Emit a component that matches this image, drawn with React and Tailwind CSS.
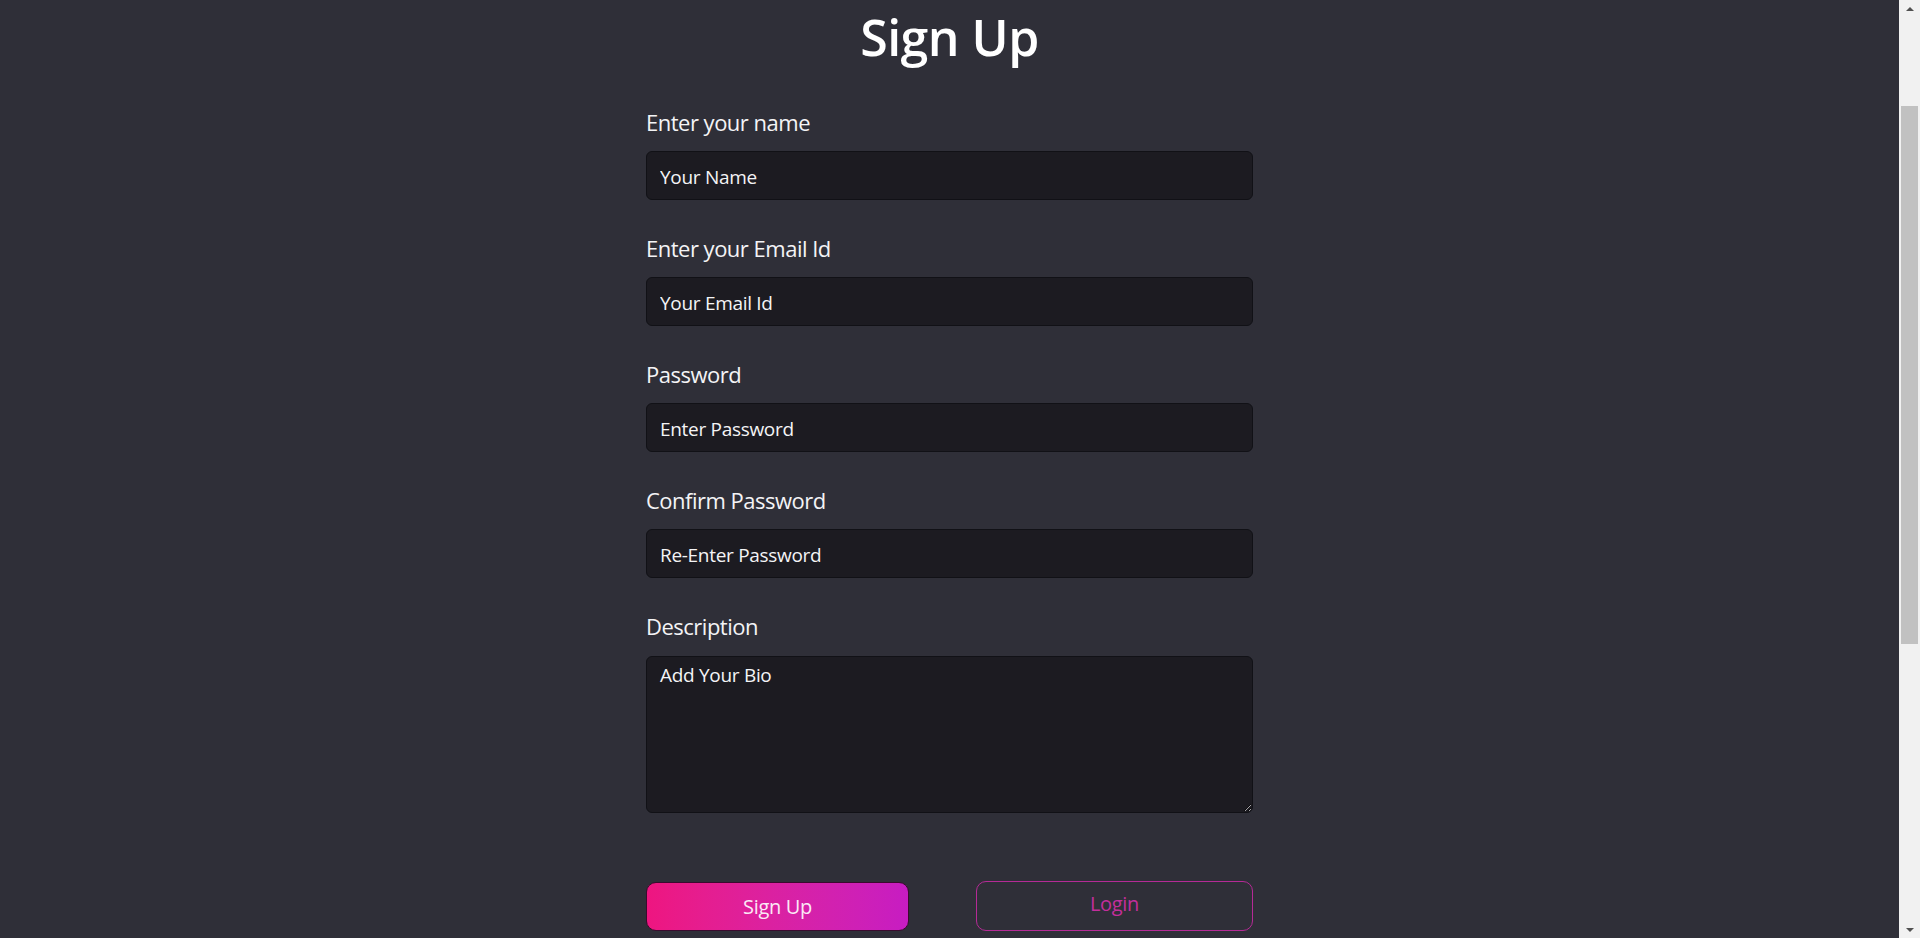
import { useState } from 'react'

const fields = [
  { label: 'Enter your name', placeholder: 'Your Name', type: 'text' },
  { label: 'Enter your Email Id', placeholder: 'Your Email Id', type: 'email' },
  { label: 'Password', placeholder: 'Enter Password', type: 'password' },
  { label: 'Confirm Password', placeholder: 'Re-Enter Password', type: 'password' },
]

function Scrollbar() {
  return (
    <aside className="sticky top-0 flex h-screen w-[21px] shrink-0 flex-col bg-[#f1f1f1]">
      <div className="flex h-[17px] items-center justify-center">
        <span className="h-0 w-0 border-x-[4px] border-b-[4px] border-x-transparent border-b-[#505050]"></span>
      </div>
      <div className="flex-1 px-[2px]">
        <div className="mt-[89px] h-[538px] bg-[#c1c1c1]"></div>
      </div>
      <div className="flex h-[17px] items-center justify-center">
        <span className="h-0 w-0 border-x-[4px] border-t-[4px] border-x-transparent border-t-[#505050]"></span>
      </div>
    </aside>
  )
}

export default function App() {
  const [bio, setBio] = useState('')

  return (
    <div className="flex min-h-screen bg-[#2f2f38] font-['Open_Sans',sans-serif] text-white">
      <main className="flex-1 pb-24">
        <div className="mx-auto w-[607px] pt-[6px]">
          {/* Title */}
          <h1 className="text-center text-[50px] font-semibold leading-[62px] tracking-[-0.5px]">Sign Up</h1>

          <form className="mt-[39px] flex flex-col" onSubmit={e => e.preventDefault()}>
            {fields.map(f => (
              <div key={f.label} className="mb-[33px]">
                <label className="block text-[22px] leading-[30px] tracking-[-0.5px] text-[#f4f4f6]">{f.label}</label>
                <input
                  type="text"
                  placeholder={f.placeholder}
                  className="mt-[14px] block h-[49px] w-full rounded-[6px] border border-[#111116] bg-[#1c1b21] px-[13px] pt-[3px] text-[19px] tracking-[-0.3px] text-white outline-none placeholder:text-[#f4f4f6]"
                />
              </div>
            ))}

            {/* Description */}
            <div>
              <label className="block text-[22px] leading-[30px] tracking-[-0.5px] text-[#f4f4f6]">Description</label>
              <textarea
                value={bio}
                onChange={e => setBio(e.target.value)}
                placeholder="Add Your Bio"
                className="mt-[15px] block h-[157px] w-full rounded-[6px] border border-[#111116] bg-[#1c1b21] px-[13px] py-[5px] text-[19px] leading-[26px] tracking-[-0.3px] text-white outline-none placeholder:text-[#f4f4f6]"
              />
            </div>

            {/* Buttons */}
            <div className="mt-[68px] flex items-center justify-between">
              <button
                type="submit"
                className="h-[49px] w-[263px] rounded-[10px] border border-[#3b0b2e] bg-gradient-to-r from-[#ee1580] to-[#c71cc2] pt-[2px] text-[20px] tracking-[-0.3px] text-[#fbe9f5]"
              >
                Sign Up
              </button>
              <button
                type="button"
                className="h-[50px] w-[277px] rounded-[10px] border border-[#b52a96] bg-transparent pb-[4px] text-[20px] tracking-[-0.3px] text-[#c42e9c]"
              >
                Login
              </button>
            </div>
          </form>
        </div>
      </main>
      <Scrollbar />
    </div>
  )
}
